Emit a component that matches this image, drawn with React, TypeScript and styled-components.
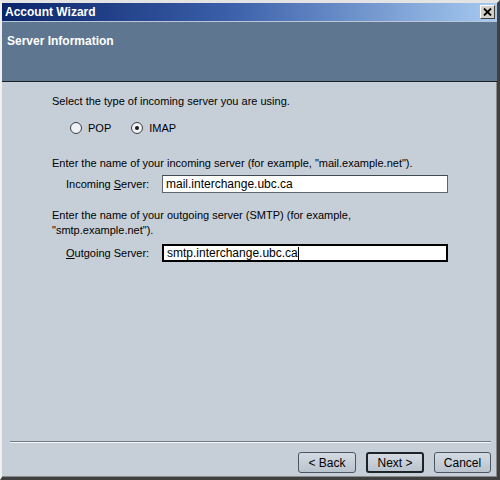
import React from 'react'
import styled, { createGlobalStyle } from 'styled-components'

const GlobalStyle = createGlobalStyle`
  html, body {
    margin: 0;
    padding: 0;
    background: #c6cfd8;
  }
  body {
    font-family: 'Liberation Sans', Arial, sans-serif;
    font-size: 11px;
  }
`

const Frame = styled.div`
  box-sizing: border-box;
  width: 500px;
  height: 480px;
  display: flex;
  flex-direction: column;
  background: #c6cfd8;
  border-top: 3px solid #e4e4e4;
  border-left: 2px solid #f0f0f0;
  border-right: 3px solid #404040;
  border-bottom: 3px solid #404040;
  box-shadow: inset -1px -1px 0 #8a8a8a;
`

const TitleBar = styled.div`
  height: 18px;
  display: flex;
  align-items: center;
  justify-content: space-between;
  padding: 0 2px 0 3px;
  background: linear-gradient(to right, #0a246a, #3a5ea8 45%, #a6caf0);
  color: #fff;
  font-weight: bold;
  font-size: 12px;
`

const CloseButton = styled.div`
  box-sizing: border-box;
  width: 15px;
  height: 14px;
  display: flex;
  align-items: center;
  justify-content: center;
  background: #d4d0c8;
  border: 1px solid;
  border-color: #ffffff #404040 #404040 #ffffff;
`

const Header = styled.div`
  height: 61px;
  box-sizing: border-box;
  border-top: 1px solid #b8c8da;
  border-bottom: 1px solid #1b1f24;
  background: #5e7690;
  color: #fff;
  font-weight: bold;
  font-size: 12px;
  padding: 12px 0 0 5px;
`

const Content = styled.div`
  flex: 1;
  padding: 12px 0 0 50px;
  color: #000;
`

const Prompt = styled.div<{ $top?: number }>`
  line-height: 15px;
  width: 380px;
  margin-top: ${(p) => p.$top ?? 0}px;
`

const RadioRow = styled.div`
  display: flex;
  align-items: center;
  gap: 6px;
  margin: 13px 0 22px 18px;
`

const RadioCircle = styled.span<{ $checked?: boolean }>`
  box-sizing: border-box;
  width: 12px;
  height: 12px;
  border-radius: 50%;
  border: 1px solid #3a3f45;
  background: #eef2f6;
  display: flex;
  align-items: center;
  justify-content: center;
  &::after {
    content: '';
    width: 4px;
    height: 4px;
    border-radius: 50%;
    background: ${(p) => (p.$checked ? '#1a1a1a' : 'transparent')};
  }
`

const RadioLabel = styled.span`
  margin-right: 14px;
`

const FieldRow = styled.div<{ $top: number }>`
  display: flex;
  align-items: center;
  margin: ${(p) => p.$top}px 0 0 14px;
`

const FieldLabel = styled.span`
  width: 96px;
`

const Underline = styled.span`
  text-decoration: underline;
`

const Input = styled.div<{ $focused?: boolean }>`
  box-sizing: border-box;
  width: 286px;
  height: 18px;
  display: flex;
  align-items: center;
  padding-left: 3px;
  background: #fff;
  font-size: 12px;
  border: ${(p) => (p.$focused ? '2px solid #000' : '1px solid #5c6670')};
  border-top-color: ${(p) => (p.$focused ? '#000' : '#404850')};
`

const Caret = styled.span`
  width: 1px;
  height: 13px;
  background: #000;
`

const Footer = styled.div`
  padding: 0 6px 4px 8px;
`

const Separator = styled.div`
  height: 1px;
  background: #6f7c88;
  border-bottom: 1px solid #f4f6f8;
`

const ButtonRow = styled.div`
  display: flex;
  justify-content: flex-end;
  gap: 10px;
  margin-top: 9px;
`

const Button = styled.div<{ $default?: boolean; $w: number }>`
  box-sizing: border-box;
  width: ${(p) => p.$w}px;
  height: 21px;
  display: flex;
  align-items: center;
  justify-content: center;
  font-size: 12px;
  border-radius: 3px;
  background: linear-gradient(#d3dae2, #bac4ce);
  border: ${(p) => (p.$default ? '2px solid #1e2328' : '1px solid #4c5660')};
`

export default function App() {
  return (
    <>
      <GlobalStyle />
      <Frame>
        <TitleBar>
          <span>Account Wizard</span>
          <CloseButton>
            <svg width="9" height="8" viewBox="0 0 9 8">
              <path d="M1 0.5 L8 7.5 M8 0.5 L1 7.5" stroke="#000" strokeWidth="1.8" />
            </svg>
          </CloseButton>
        </TitleBar>
        <Header>Server Information</Header>
        <Content>
          <Prompt>Select the type of incoming server you are using.</Prompt>
          <RadioRow>
            <RadioCircle />
            <RadioLabel>POP</RadioLabel>
            <RadioCircle $checked />
            <RadioLabel>IMAP</RadioLabel>
          </RadioRow>
          <Prompt>
            Enter the name of your incoming server (for example, "mail.example.net").
          </Prompt>
          <FieldRow $top={4}>
            <FieldLabel>
              Incoming <Underline>S</Underline>erver:
            </FieldLabel>
            <Input>mail.interchange.ubc.ca</Input>
          </FieldRow>
          <Prompt $top={15}>
            Enter the name of your outgoing server (SMTP) (for example,
            "smtp.example.net").
          </Prompt>
          <FieldRow $top={6}>
            <FieldLabel>
              <Underline>O</Underline>utgoing Server:
            </FieldLabel>
            <Input $focused>
              smtp.interchange.ubc.ca
              <Caret />
            </Input>
          </FieldRow>
        </Content>
        <Footer>
          <Separator />
          <ButtonRow>
            <Button $w={58}>&lt; Back</Button>
            <Button $w={58} $default>
              Next &gt;
            </Button>
            <Button $w={57}>Cancel</Button>
          </ButtonRow>
        </Footer>
      </Frame>
    </>
  )
}
